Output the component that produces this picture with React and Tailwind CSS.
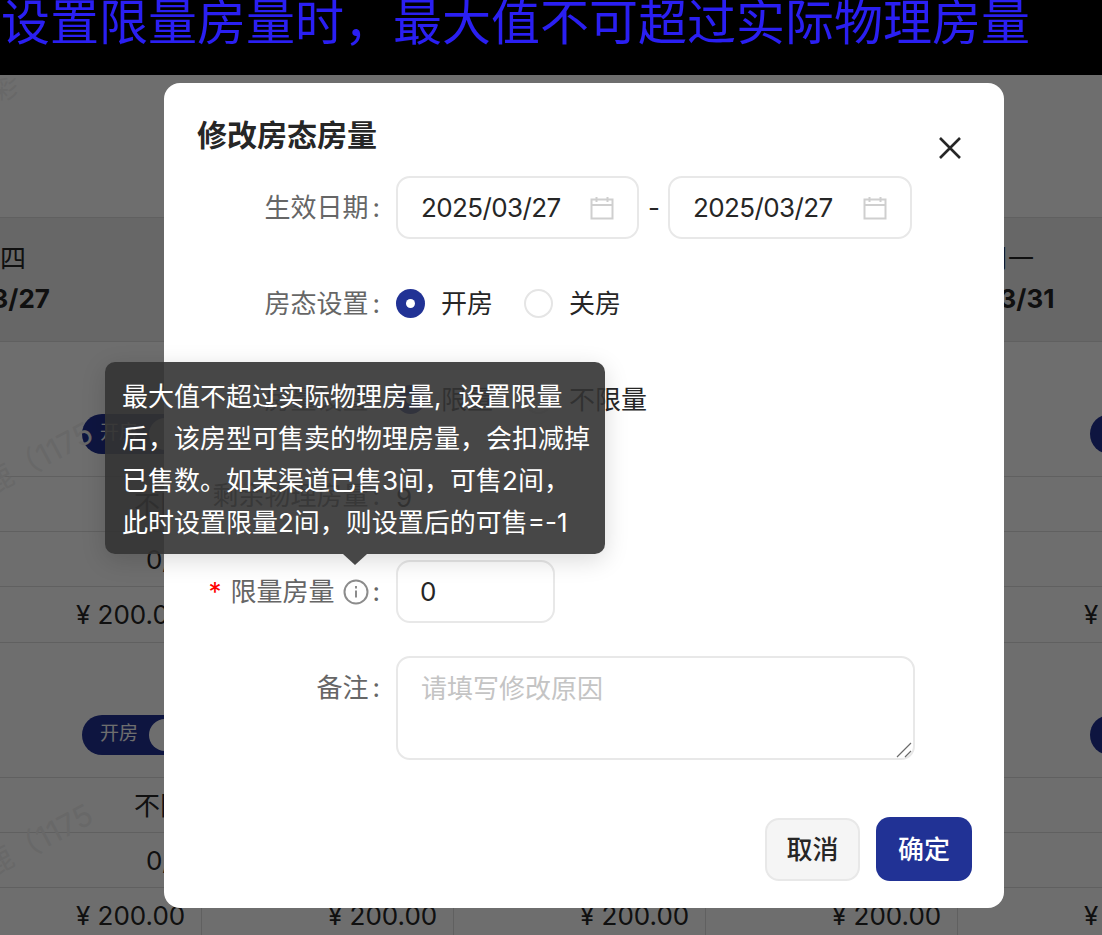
import React from "react";

const days = [
  ["周四", "03/27"],
  ["周五", "03/28"],
  ["周六", "03/29"],
  ["周日", "03/30"],
  ["周一", "03/31"],
];
const cols = [0, 1, 2, 3, 4];

function Row({ pad, h = "h-[55px]", children }) {
  return (
    <>
      {cols.map((c) => (
        <div key={c} className={`${h} ${pad} flex items-center border-r border-b border-[#dedede] text-[26px] text-[#262626] whitespace-nowrap`}>
          {children}
        </div>
      ))}
    </>
  );
}

function Pill() {
  return (
    <div className="flex h-10 w-[104px] items-center justify-between rounded-full bg-[#213295] pl-[18px] pr-[5px] text-[19px] text-white">
      <span>开房</span>
      <span className="h-8 w-8 rounded-full bg-white" />
    </div>
  );
}

function Calendar() {
  return (
    <svg width="24" height="24" viewBox="0 0 24 24" fill="none" stroke="#cfcfcf" strokeWidth="2" className="shrink-0">
      <rect x="1.5" y="3.5" width="21" height="19" />
      <path d="M1.5 9h21M6.5 1v5M17.5 1v5" />
    </svg>
  );
}

function DateBox({ w, value }) {
  return (
    <div className={`flex h-[63px] ${w} items-center justify-between rounded-[14px] border-2 border-[#e8e8e8] pl-[23px] pr-[23px] text-[26px] tracking-[-0.6px] text-[#262626]`}>
      <span>{value}</span>
      <Calendar />
    </div>
  );
}

function Radio({ on, label, gap = "mr-[31px]" }) {
  return (
    <div className={`flex items-center gap-[16px] ${gap}`}>
      {on ? (
        <span className="flex h-[29px] w-[29px] items-center justify-center rounded-full bg-[#213295]">
          <span className="h-[9px] w-[9px] rounded-full bg-white" />
        </span>
      ) : (
        <span className="h-[29px] w-[29px] rounded-full border-2 border-[#e5e5e5] bg-white" />
      )}
      <span className="text-[26px] text-[#262626]">{label}</span>
    </div>
  );
}

function FormRow({ label, children, h = "h-[63px]", items = "items-center", labelPad = "" }) {
  return (
    <div className={`flex ${h} ${items}`}>
      <div className={`flex w-[232px] shrink-0 items-center justify-end pr-[16px] text-[26px] leading-[36px] text-[#666666] ${labelPad}`}>
        {label}
        <span className="ml-[4px]">:</span>
      </div>
      {children}
    </div>
  );
}

export default function App() {
  return (
    <div className="relative h-[935px] w-[1102px] overflow-hidden bg-white font-['Inter','Noto_Sans_CJK_SC',sans-serif]">
      <div className="h-[75px] bg-black pl-[1px] text-[49px] leading-[45px] text-[#2a1ff2] whitespace-nowrap">
        设置限量房量时，最大值不可超过实际物理房量
      </div>

      <div className="h-[142px]" />

      <div className="-ml-[50px] grid w-[1260px] grid-cols-5">
        {days.map(([d, t]) => (
          <div key={t} className="flex h-[125px] flex-col items-start gap-[8px] border-y border-[#dedede] bg-[#efefef] pl-[24px] pt-[25px] text-[#262626]">
            <span className="text-[26px] leading-[32px]">{d}</span>
            <span className="text-[26px] font-bold leading-[32px]">{t}</span>
          </div>
        ))}
        {[0, 1].map((b) => (
          <React.Fragment key={b}>
            <Row pad="pl-[132px] pt-[49px]" h="h-[135px]">
              <Pill />
            </Row>
            <Row pad="pl-[184px]">不限</Row>
            <Row pad="pl-[196px]">0/0</Row>
            <Row pad="pl-[126px]" h="h-[56px]">¥ 200.00</Row>
          </React.Fragment>
        ))}
      </div>

      <div className="absolute left-[-22px] top-[818px] -rotate-[28deg] text-[30px] text-[#f0f0f0]">鹿（1175</div>
      <div className="absolute left-[-22px] top-[436px] -rotate-[28deg] text-[30px] text-[#f0f0f0]">鹿（1175</div>
      <div className="absolute left-[-6px] top-[72px] text-[24px] text-[#f0f0f0]">彩</div>

      <div className="absolute inset-x-0 bottom-0 top-[75px] bg-black/[0.57]" />

      <div className="absolute left-[164px] top-[83px] h-[825px] w-[840px] rounded-[16px] bg-white">
        <div className="pl-[33px] pt-[33px] text-[30px] font-semibold leading-[38px] text-[#262626]">修改房态房量</div>
        <svg width="24" height="24" viewBox="0 0 24 24" fill="none" stroke="#262626" strokeWidth="2.6" className="absolute left-[774px] top-[53px]">
          <path d="M2 2l20 20M22 2L2 22" />
        </svg>

        <div className="mt-[22px] flex flex-col gap-[33px]">
          <FormRow label="生效日期">
            <DateBox w="w-[243px]" value="2025/03/27" />
            <span className="mx-[9px] w-[11px] text-center text-[26px] text-[#262626]">-</span>
            <DateBox w="w-[244px]" value="2025/03/27" />
          </FormRow>
          <FormRow label="房态设置">
            <Radio on label="开房" />
            <Radio label="关房" />
          </FormRow>
          <FormRow label="房量设置">
            <Radio on label="限量" />
            <Radio label="不限量" />
          </FormRow>
          <FormRow label="剩余物理房量">
            <span className="mt-[3px] text-[26px] text-[#262626]">9</span>
          </FormRow>
          <FormRow
            label={
              <>
                <span className="mr-[9px] text-[#ff0000]">*</span>
                限量房量
                <svg width="26" height="26" viewBox="0 0 26 26" fill="none" stroke="#8c8c8c" strokeWidth="2" className="ml-[8px]">
                  <circle cx="13" cy="13" r="11.5" />
                  <path d="M13 11.5v7M13 7v2.4" />
                </svg>
              </>
            }
          >
            <div className="flex h-[63px] w-[159px] items-center rounded-[14px] border-2 border-[#e8e8e8] pl-[22px] text-[26px] text-[#262626]">0</div>
          </FormRow>
          <FormRow label="备注" h="h-[104px]" items="items-start" labelPad="pt-[14px]">
            <div className="relative h-[104px] w-[519px]">
              <textarea
                placeholder="请填写修改原因"
                className="block h-full w-full resize-none rounded-[14px] border-2 border-[#e8e8e8] px-[23px] py-[13px] text-[26px] leading-[36px] text-[#262626] placeholder:text-[#c4c4c4] outline-none"
              />
              <svg width="16" height="16" viewBox="0 0 16 16" fill="none" stroke="#6b6b6b" strokeWidth="1.2" className="absolute bottom-[2px] right-[3px]">
                <path d="M1 15L15 1M9 15l6-6" />
              </svg>
            </div>
          </FormRow>
        </div>

        <div className="absolute bottom-[27px] right-[32px] flex items-center gap-[16px]">
          <div className="flex h-[63px] w-[95px] items-center justify-center rounded-[14px] border-2 border-[#e8e8e8] bg-[#f5f5f5] text-[26px] font-medium text-[#262626]">取消</div>
          <div className="flex h-[64px] w-[96px] items-center justify-center rounded-[14px] bg-[#213295] text-[26px] font-medium text-white">确定</div>
        </div>
      </div>

      <div className="absolute left-[105px] top-[362px] h-[192px] w-[500px] rounded-[10px] bg-[#333333]/90 py-[14px] pl-[17px] pr-[14px] text-[26px] leading-[42px] text-white shadow-[0_6px_24px_rgba(0,0,0,0.15)]">
        <div className="whitespace-nowrap">最大值不超过实际物理房量,<span className="ml-[17px]">设置限量</span></div>
        <div className="whitespace-nowrap">后，该房型可售卖的物理房量，会扣减掉</div>
        <div className="whitespace-nowrap">已售数。如某渠道已售3间，可售2间，</div>
        <div className="whitespace-nowrap">此时设置限量2间，则设置后的可售=-1</div>
        <div className="absolute left-[238px] top-full h-0 w-0 border-x-[12px] border-t-[11px] border-x-transparent border-t-[#474747]" />
      </div>
    </div>
  );
}
